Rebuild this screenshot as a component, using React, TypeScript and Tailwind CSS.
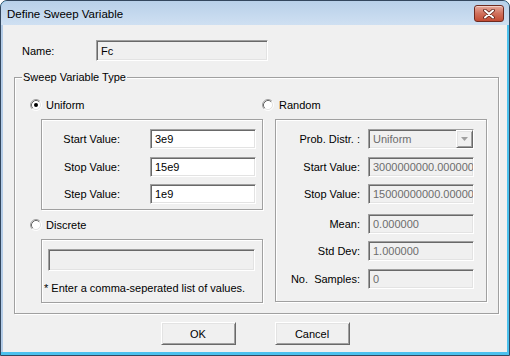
import React from 'react';

const sunken =
  'border border-[#a0a0a0] border-r-white border-b-white shadow-[inset_1px_1px_0_#696969,inset_-1px_-1px_0_#e3e3e3]';
const raised =
  'border border-white border-r-[#696969] border-b-[#696969] shadow-[inset_1px_1px_0_#e3e3e3,inset_-1px_-1px_0_#a0a0a0]';
const etched = 'border border-[#a0a0a0] shadow-[inset_1px_1px_0_#fff,1px_1px_0_#fff]';

function Radio({ checked = false }: { checked?: boolean }) {
  return (
    <svg width="12" height="12" viewBox="0 0 12 12" className="shrink-0">
      <circle cx="6" cy="6" r="4.5" fill="#fff" />
      <path d="M2.11 9.89A5.5 5.5 0 0 1 9.89 2.11" fill="none" stroke="#a0a0a0" />
      <path d="M9.89 2.11A5.5 5.5 0 0 1 2.11 9.89" fill="none" stroke="#fff" />
      <path d="M2.82 9.18A4.5 4.5 0 0 1 9.18 2.82" fill="none" stroke="#696969" />
      <path d="M9.18 2.82A4.5 4.5 0 0 1 2.82 9.18" fill="none" stroke="#e3e3e3" />
      {checked && <circle cx="6" cy="6" r="2" fill="#000" />}
    </svg>
  );
}

function Field({
  value,
  disabled = false,
  className = '',
}: {
  value: string;
  disabled?: boolean;
  className?: string;
}) {
  return (
    <div
      className={`${sunken} flex h-[20px] w-[106px] items-center overflow-hidden whitespace-nowrap pl-[4px] ${
        disabled ? 'bg-[#f0f0f0] text-[#6d6d6d]' : 'bg-white'
      } ${className}`}
    >
      {value}
    </div>
  );
}

const uniformRows = [
  { label: 'Start Value:', value: '3e9', gap: '' },
  { label: 'Stop Value:', value: '15e9', gap: 'mt-[8px]' },
  { label: 'Step Value:', value: '1e9', gap: 'mt-[7px]' },
];

const randomRows = [
  { label: 'Start Value:', value: '3000000000.000000', gap: 'mt-[8px]' },
  { label: 'Stop Value:', value: '15000000000.000000', gap: 'mt-[7px]' },
  { label: 'Mean:', value: '0.000000', gap: 'mt-[10px]' },
  { label: 'Std Dev:', value: '1.000000', gap: 'mt-[7px]' },
  { label: 'No.  Samples:', value: '0', gap: 'mt-[8px]' },
];

export default function App() {
  return (
    <div className="h-[356px] w-[510px] overflow-hidden font-['Liberation_Sans',Arial,sans-serif] text-[11px] leading-[14px] text-black">
      <div className="flex h-full flex-col rounded-t-[7px] border border-[#33475e] bg-[#4bc1ee]">
        {/* title bar */}
        <div className="flex h-[24px] shrink-0 items-start justify-between rounded-t-[6px] bg-gradient-to-b from-[#b8d0e9] to-[#cfe0f2] pl-[6px] pr-[5px]">
          <span className="mt-[6px] text-[11.5px] leading-[14px]">Define Sweep Variable</span>
          <div className="mt-[4px] flex h-[17px] w-[30px] items-center justify-center rounded-[3px] border border-[#6e2a20] bg-gradient-to-b from-[#e6a99d] via-[#d0705c] to-[#c24a32] shadow-[inset_0_1px_0_#f3cfc7]">
            <svg width="12" height="10" viewBox="0 0 12 10">
              <path d="M2 1.5L10 8.5M10 1.5L2 8.5" stroke="#5b1d14" strokeWidth="3.6" strokeLinecap="round" />
              <path d="M2 1.5L10 8.5M10 1.5L2 8.5" stroke="#fff" strokeWidth="2" strokeLinecap="round" />
            </svg>
          </div>
        </div>

        {/* client area */}
        <div className="flex flex-1 pb-[3px] pr-[2px]">
          <div className="flex flex-1 flex-col border-l-2 border-l-[#b4cce7] bg-[#f0f0f0] pt-[15px]">
            <div className="flex h-[21px] items-center pl-[19px]">
              <span className="w-[74px]">Name:</span>
              <div className={`${sunken} flex h-[21px] w-[172px] items-center bg-[#f0f0f0] pl-[4px]`}>Fc</div>
            </div>

            <div className={`${etched} relative ml-[11px] mt-[16px] flex h-[237px] w-[485px] shrink-0`}>
              <span className="absolute -top-[8px] left-[7px] bg-[#f0f0f0] px-[1px]">Sweep Variable Type</span>

              {/* left column */}
              <div className="flex w-[247px] flex-col">
                <div className="mt-[20px] flex h-[14px] items-center gap-[4px] pl-[15px]">
                  <Radio checked />
                  <span>Uniform</span>
                </div>
                <div className={`${etched} ml-[26px] mt-[7px] flex h-[91px] w-[222px] flex-col pt-[9px]`}>
                  {uniformRows.map((r) => (
                    <div key={r.label} className={`flex h-[20px] items-center ${r.gap}`}>
                      <span className="w-[78px] text-right">{r.label}</span>
                      <Field value={r.value} className="ml-[30px]" />
                    </div>
                  ))}
                </div>
                <div className="mt-[8px] flex h-[14px] items-center gap-[4px] pl-[15px]">
                  <Radio />
                  <span>Discrete</span>
                </div>
                <div className={`${etched} ml-[26px] mt-[7px] flex h-[64px] w-[222px] flex-col`}>
                  <div className={`${sunken} ml-[6px] mt-[9px] h-[22px] w-[207px] bg-[#f0f0f0]`} />
                  <span className="ml-[2px] mt-[10px]">* Enter a comma-seperated list of values.</span>
                </div>
              </div>

              {/* right column */}
              <div className="flex flex-col">
                <div className="mt-[20px] flex h-[14px] items-center gap-[5px]">
                  <Radio />
                  <span>Random</span>
                </div>
                <div className={`${etched} ml-[13px] mt-[7px] flex h-[183px] w-[212px] flex-col pt-[9px]`}>
                  <div className="flex h-[20px] items-center">
                    <span className="w-[84px] text-right">Prob. Distr. :</span>
                    <div className={`${sunken} ml-[8px] flex h-[20px] w-[106px] items-center bg-[#f0f0f0] pl-[4px] text-[#6d6d6d]`}>
                      <span className="flex-1">Uniform</span>
                      <div className={`${raised} flex h-[18px] w-[17px] items-center justify-center bg-[#f0f0f0]`}>
                        <svg width="7" height="4" viewBox="0 0 7 4">
                          <path d="M0 0H7L3.5 4Z" fill="#a0a0a0" />
                        </svg>
                      </div>
                    </div>
                  </div>
                  {randomRows.map((r) => (
                    <div key={r.label} className={`flex h-[20px] items-center ${r.gap}`}>
                      <span className="w-[84px] whitespace-pre text-right">{r.label}</span>
                      <Field value={r.value} disabled className="ml-[8px]" />
                    </div>
                  ))}
                </div>
              </div>
            </div>

            <div className="mt-[8px] flex justify-center gap-[39px]">
              <button className={`${raised} h-[23px] w-[75px] bg-[#f0f0f0]`}>OK</button>
              <button className={`${raised} h-[23px] w-[75px] bg-[#f0f0f0]`}>Cancel</button>
            </div>
          </div>
        </div>
      </div>
    </div>
  );
}
